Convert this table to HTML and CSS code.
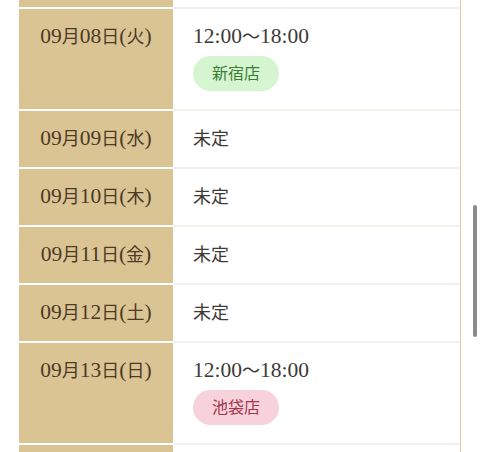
FILE: index.html
```html
<!DOCTYPE html>
<html lang="ja">
<head>
<meta charset="utf-8">
<title>営業日</title>
<link rel="stylesheet" href="styles.css">
</head>
<body>
<div class="schedule">
  <div class="row row-prev">
    <div class="date"><span class="n">09</span>月<span class="n">07</span>日<span class="n">(</span>月<span class="n">)</span></div>
    <div class="info">未定</div>
  </div>
  <div class="row">
    <div class="date"><span class="n">09</span>月<span class="n">08</span>日<span class="n">(</span>火<span class="n">)</span></div>
    <div class="info">
      <div class="time"><span class="n">12:00</span>〜<span class="n">18:00</span></div>
      <span class="badge badge-green">新宿店</span>
    </div>
  </div>
  <div class="row">
    <div class="date"><span class="n">09</span>月<span class="n">09</span>日<span class="n">(</span>水<span class="n">)</span></div>
    <div class="info">未定</div>
  </div>
  <div class="row">
    <div class="date"><span class="n">09</span>月<span class="n">10</span>日<span class="n">(</span>木<span class="n">)</span></div>
    <div class="info">未定</div>
  </div>
  <div class="row">
    <div class="date"><span class="n">09</span>月<span class="n">11</span>日<span class="n">(</span>金<span class="n">)</span></div>
    <div class="info">未定</div>
  </div>
  <div class="row">
    <div class="date"><span class="n">09</span>月<span class="n">12</span>日<span class="n">(</span>土<span class="n">)</span></div>
    <div class="info">未定</div>
  </div>
  <div class="row">
    <div class="date"><span class="n">09</span>月<span class="n">13</span>日<span class="n">(</span>日<span class="n">)</span></div>
    <div class="info">
      <div class="time"><span class="n">12:00</span>〜<span class="n">18:00</span></div>
      <span class="badge badge-pink">池袋店</span>
    </div>
  </div>
  <div class="row">
    <div class="date"><span class="n">09</span>月<span class="n">14</span>日<span class="n">(</span>月<span class="n">)</span></div>
    <div class="info">未定</div>
  </div>
</div>
<div class="scrollbar"></div>
</body>
</html>
```
FILE: styles.css
```css
html, body {
  margin: 0;
  padding: 0;
  background: #ffffff;
  overflow: hidden;
  height: 452px;
}

body {
  font-family: "Liberation Serif", "Noto Sans CJK JP", serif;
  font-size: 18px;
  color: #3d3a36;
}

.schedule {
  margin: -49px 0 0 19px;
  width: 441px;
  border-right: 1px solid #dccda5;
}

.row {
  display: grid;
  grid-template-columns: 154px 1fr;
}

.date {
  background: #dbc494;
  border-bottom: 2px solid #ffffff;
  color: #4b3a26;
  text-align: center;
  padding: 18px 0;
  line-height: 20px;
}

.info {
  background: #ffffff;
  border-bottom: 2px solid #f3f1ec;
  padding: 18px 20px;
  line-height: 20px;
}

.n {
  font-size: 21.5px;
  line-height: 0;
}

.time {
  height: 20px;
  line-height: 20px;
}

.badge {
  display: inline-block;
  margin-top: 9px;
  height: 35px;
  line-height: 35px;
  padding: 0 19px;
  border-radius: 18px;
  font-size: 16px;
  vertical-align: top;
}

.badge-green {
  background: #d4f5cf;
  color: #3c7d36;
}

.badge-pink {
  background: #f8d2db;
  color: #a23650;
}

.scrollbar {
  position: fixed;
  left: 473px;
  top: 205px;
  width: 4px;
  height: 132px;
  border-radius: 2px;
  background: #8a8a8a;
}
```
